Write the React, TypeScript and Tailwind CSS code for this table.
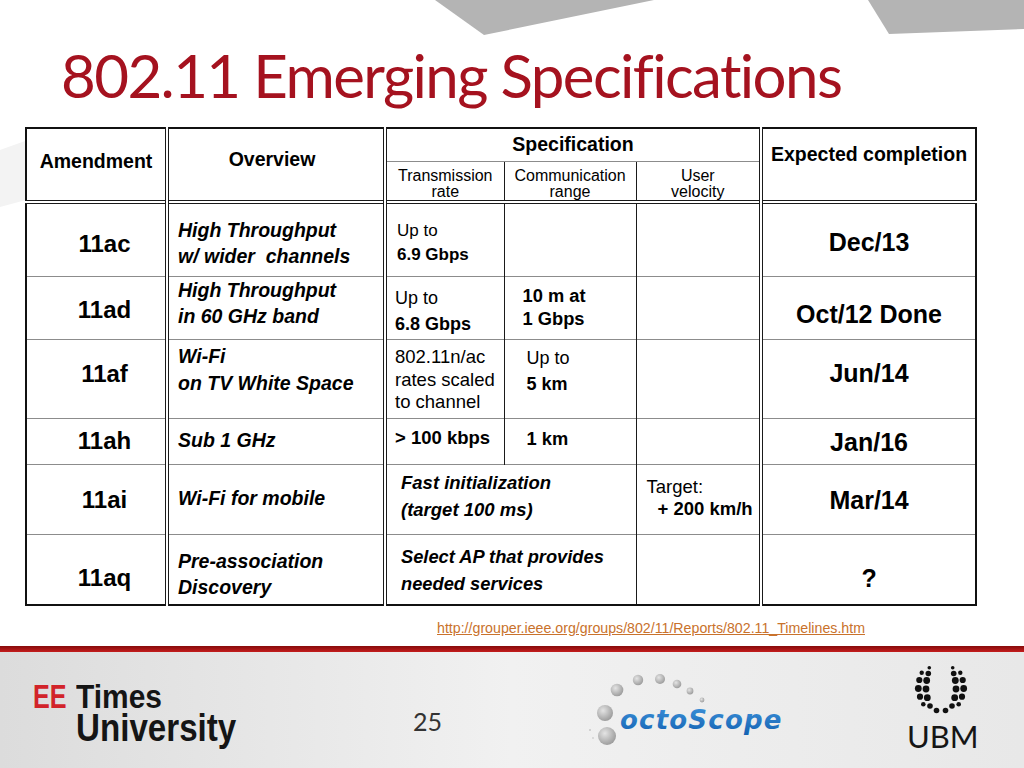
const dbl = "[border-left:4px_double_#1a1a1a]";
const thin = "[border-left:1px_solid_#1a1a1a]";
const gTop = "[border-top:1px_solid_#8c8c8c]";
const dTop = "[border-top:4px_double_#1a1a1a]";

const amend = "align-top text-center pl-[17px] text-[24px] font-bold leading-[28px]";
const over = "align-top pl-[9px] text-[19.5px] font-bold italic leading-[26px]";
const date = "align-top text-center text-[25px] font-bold leading-[30px]";
const sub = "align-top pt-[6px] text-center text-[16px] leading-[16px]";

function OctoScope() {
  const dots: [number, number, number][] = [
    [607, 735, 9],
    [605, 712, 8],
    [617, 689, 6.3],
    [638, 679, 5.2],
    [660, 678, 5],
    [677, 683, 4.3],
    [690, 690, 3.4],
    [702, 699, 2.4],
  ];
  return (
    <svg width="200" height="82" viewBox="588 668 200 82">
      <defs>
        <radialGradient id="octoDot" cx="38%" cy="35%" r="70%">
          <stop offset="0" stopColor="#e4e4e4" />
          <stop offset="1" stopColor="#999999" />
        </radialGradient>
        <linearGradient id="octoText" x1="0" y1="0" x2="0" y2="1">
          <stop offset="0" stopColor="#3d92da" />
          <stop offset="1" stopColor="#1462b2" />
        </linearGradient>
      </defs>
      {dots.map(([cx, cy, r], i) => (
        <circle key={i} cx={cx} cy={cy} r={r} fill="url(#octoDot)" />
      ))}
      <circle cx={590} cy={729} r={1} fill="#c8c8c8" />
      <circle cx={593} cy={737} r={0.9} fill="#d0d0d0" />
      <text
        x="620"
        y="728"
        fontFamily="'DejaVu Sans', sans-serif"
        fontWeight="bold"
        fontStyle="italic"
        fontSize="26"
        letterSpacing="1.2"
        fill="url(#octoText)"
      >
        octoScope
      </text>
    </svg>
  );
}

function UbmMark() {
  // left half of the dotted U, mirrored for the right half
  const half: [number, number, number][] = [
    [929.3, 666.7, 1.8],
    [921.7, 671.7, 2.2],
    [928.3, 672.5, 2.8],
    [919.3, 679, 3.1],
    [926.7, 679.5, 3.4],
    [918.3, 687.5, 3.4],
    [926, 688, 3.4],
    [920, 695.7, 3.1],
    [927.3, 696.7, 3.4],
    [923.3, 703.3, 2.3],
    [930, 705, 2.8],
    [936.5, 709.5, 2.8],
  ];
  const cx = 941;
  return (
    <svg width="70" height="52" viewBox="906 662 70 52">
      {half.map(([x, y, r], i) => (
        <g key={i} fill="#111">
          <circle cx={x} cy={y} r={r} />
          <circle cx={2 * cx - x} cy={y} r={r} />
        </g>
      ))}
    </svg>
  );
}

export default function App() {
  return (
    <div className="relative flex h-[768px] w-[1024px] flex-col overflow-hidden bg-white text-black [font-family:'Liberation_Sans',Arial,Helvetica,sans-serif]">
      {/* background slide art */}
      <svg className="pointer-events-none absolute left-0 top-0" width="1024" height="240" viewBox="0 0 1024 240">
        <polygon points="435,0 654,0 484,35" fill="#b4b4b4" />
        <polygon points="868,0 1024,0 1024,29 889,34" fill="#b4b4b4" />
        <polygon points="0,150 50,132 26,200 0,207" fill="#f3f3f3" />
      </svg>

      <h1 className="relative ml-[61px] mt-[43px] text-[60px] font-normal leading-[64px] tracking-[-1.6px] text-[#a5121f] [font-family:Lato,sans-serif] [font-variant-ligatures:none]">
        802.11 Emerging Specifications
      </h1>

      <div className="relative ml-[25px] mt-[20px]">
        <table className="w-[950px] table-fixed border-collapse bg-white [border:2px_solid_#111]">
          <colgroup>
            <col className="w-[141px]" />
            <col className="w-[218px]" />
            <col className="w-[119px]" />
            <col className="w-[132px]" />
            <col className="w-[125px]" />
            <col className="w-[215px]" />
          </colgroup>
          <thead>
            <tr className="h-[33px]">
              <th rowSpan={2} className="align-top pt-[21px] text-center text-[19.5px] font-bold leading-[22px]">
                Amendment
              </th>
              <th rowSpan={2} className={`${dbl} align-top pr-[8px] pt-[19px] text-center text-[19.5px] font-bold leading-[22px]`}>
                Overview
              </th>
              <th colSpan={3} className={`${dbl} align-top pt-[4px] text-center text-[19.5px] font-bold leading-[22px]`}>
                Specification
              </th>
              <th rowSpan={2} className={`${dbl} align-top pt-[14px] text-center text-[19.5px] font-bold leading-[22px]`}>
                Expected completion
              </th>
            </tr>
            <tr className="h-[40px]">
              <td className={`${gTop} ${dbl} ${sub}`}>
                Transmission
                <br />
                rate
              </td>
              <td className={`${gTop} ${thin} ${sub}`}>
                Communication
                <br />
                range
              </td>
              <td className={`${gTop} ${thin} ${sub}`}>
                User
                <br />
                velocity
              </td>
            </tr>
          </thead>
          <tbody>
            <tr className="h-[75px]">
              <td className={`${dTop} ${amend} pt-[26px]`}>11ac</td>
              <td className={`${dTop} ${dbl} ${over} pt-[13px]`}>
                High Throughput
                <br />
                w/ wider{"\u00a0"} channels
              </td>
              <td className={`${dTop} ${dbl} align-top pl-[10px] pt-[15px] text-[17px] leading-[24px]`}>
                Up to
                <br />
                <b>6.9 Gbps</b>
              </td>
              <td className={`${dTop} ${thin}`} />
              <td className={`${dTop} ${thin}`} />
              <td className={`${dTop} ${dbl} ${date} pt-[23px]`}>Dec/13</td>
            </tr>
            <tr className="h-[63px]">
              <td className={`${gTop} ${amend} pt-[19px]`}>11ad</td>
              <td className={`${gTop} ${dbl} ${over} pt-0 leading-[25px]`}>
                High Throughput
                <br />
                in 60 GHz band
              </td>
              <td className={`${gTop} ${dbl} align-top pl-[8px] pt-[8px] text-[18px] leading-[26px]`}>
                Up to
                <br />
                <b>6.8 Gbps</b>
              </td>
              <td className={`${gTop} ${thin} align-top pl-[18px] pt-[7px] text-[18.3px] font-bold leading-[23px]`}>
                10 m at
                <br />1 Gbps
              </td>
              <td className={`${gTop} ${thin}`} />
              <td className={`${gTop} ${dbl} ${date} pt-[22px]`}>Oct/12 Done</td>
            </tr>
            <tr className="h-[79px]">
              <td className={`${gTop} ${amend} pt-[20px]`}>11af</td>
              <td className={`${gTop} ${dbl} ${over} pt-[3px] leading-[27px]`}>
                Wi-Fi
                <br />
                on TV White Space
              </td>
              <td className={`${gTop} ${dbl} align-top pl-[8px] pt-[6px] text-[18.5px] leading-[22.5px]`}>
                802.11n/ac
                <br />
                rates scaled
                <br />
                to channel
              </td>
              <td className={`${gTop} ${thin} align-top pl-[22px] pt-[5px] text-[18px] leading-[26px]`}>
                Up to
                <br />
                <b>5 km</b>
              </td>
              <td className={`${gTop} ${thin}`} />
              <td className={`${gTop} ${dbl} ${date} pt-[18px]`}>Jun/14</td>
            </tr>
            <tr className="h-[46px]">
              <td className={`${gTop} ${amend} pt-[8px]`}>11ah</td>
              <td className={`${gTop} ${dbl} ${over} pl-[8px] pt-[8px]`}>Sub 1 GHz</td>
              <td className={`${gTop} ${dbl} align-top pl-[8px] pt-[7px] text-[18.5px] font-bold leading-[24px]`}>
                &gt; 100 kbps
              </td>
              <td className={`${gTop} ${thin} align-top pl-[22px] pt-[8px] text-[18.3px] font-bold leading-[24px]`}>
                1 km
              </td>
              <td className={`${gTop} ${thin}`} />
              <td className={`${gTop} ${dbl} ${date} pt-[8px]`}>Jan/16</td>
            </tr>
            <tr className="h-[70px]">
              <td className={`${gTop} ${amend} pt-[21px]`}>11ai</td>
              <td className={`${gTop} ${dbl} ${over} pt-[20px]`}>Wi-Fi for mobile</td>
              <td colSpan={2} className={`${gTop} ${dbl} align-top pl-[14px] pt-[4px] text-[18.5px] font-bold italic leading-[27px]`}>
                Fast initialization
                <br />
                (target 100 ms)
              </td>
              <td className={`${gTop} ${thin} align-top pl-[10px] pt-[11px] text-[18.5px] leading-[22px]`}>
                Target:
                <div className="pl-[11px] font-bold">+ 200 km/h</div>
              </td>
              <td className={`${gTop} ${dbl} ${date} pt-[20px]`}>Mar/14</td>
            </tr>
            <tr className="h-[70px]">
              <td className={`${gTop} ${amend} pt-[29px]`}>11aq</td>
              <td className={`${gTop} ${dbl} ${over} pt-[13px]`}>
                Pre-association
                <br />
                Discovery
              </td>
              <td colSpan={2} className={`${gTop} ${dbl} align-top pl-[14px] pt-[8px] text-[18.3px] font-bold italic leading-[27px]`}>
                Select AP that provides
                <br />
                needed services
              </td>
              <td className={`${gTop} ${thin}`} />
              <td className={`${gTop} ${dbl} ${date} pt-[28px]`}>?</td>
            </tr>
          </tbody>
        </table>
      </div>

      <a className="relative ml-[437px] mt-[14px] w-fit text-[14.2px] leading-[16px] text-[#c9722c] underline">
        http://grouper.ieee.org/groups/802/11/Reports/802.11_Timelines.htm
      </a>

      <footer className="mt-auto flex h-[122px] flex-col">
        <div className="h-[6px] bg-linear-to-b from-[#870b0b] to-[#c41d1d]" />
        <div className="flex flex-1 items-start bg-linear-to-r from-[#dcdcdc] via-[#f1f1f1] to-[#e8e8e8] pl-[33px]">
          <div className="flex w-[220px] items-start font-bold">
            <div className="mt-[28px] w-[35px] text-[34px] leading-[32px] text-[#d2232a]">
              <span className="inline-block origin-left scale-x-[0.74]">EE</span>
            </div>
            <div className="ml-[4px] mt-[11px] h-[91px] w-px bg-[#8a8a8a]" />
            <div className="ml-[4px] flex flex-col text-[#151515]">
              <span className="mt-[29px] inline-block origin-left scale-x-[0.88] text-[34px] leading-[30px]">Times</span>
              <span className="inline-block origin-left scale-x-[0.85] text-[39px] leading-[34px]">University</span>
            </div>
          </div>
          <div className="ml-[160px] mt-[57px] w-[30px] text-[25px] leading-[25px] text-[#333] [font-family:Lato,sans-serif]">25</div>
          <div className="ml-[145px] mt-[17px] w-[200px]">
            <OctoScope />
          </div>
          <div className="ml-[118px] mt-[11px] flex w-[70px] flex-col items-start">
            <UbmMark />
            <span className="ml-[1px] mt-[6px] text-[31px] leading-[31px] text-[#151515] [font-family:Lato,sans-serif]">UBM</span>
          </div>
        </div>
      </footer>
    </div>
  );
}
